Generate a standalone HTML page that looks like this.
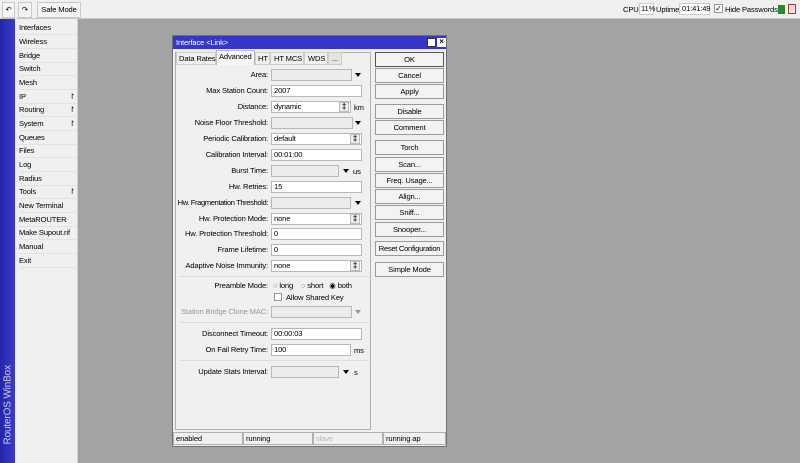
<!DOCTYPE html><html><head><style>
*{margin:0;padding:0;box-sizing:border-box}
body{width:800px;height:463px;overflow:hidden;background:#a3a3a3;font-family:"Liberation Sans",sans-serif;font-size:7.6px;letter-spacing:-0.15px;color:#000;position:relative;white-space:nowrap}
div{position:absolute}
.tb{left:0;top:0;width:800px;height:19px;background:#f0f0f0;border-bottom:1px solid #c8c8c8}
.tbtn{top:2px;height:16px;border:1px solid #c8c8c8;background:#f4f4f4;text-align:center;line-height:14px}
.side{left:0;top:19px;width:15px;height:444px;background:linear-gradient(90deg,#2525a8,#3a3ad0)}
.menu{left:15px;top:19px;width:63px;height:444px;background:#f0f0f0;border-right:1px solid #d0d0d0}
.mi{left:4px;width:58px;height:13.7px;line-height:13px;border-bottom:1px solid #e2e2e2}
.win{left:172px;top:35px;width:275px;height:412px;background:#f0f0f0;border:1px solid #707070}
.title{left:0;top:0;width:273px;height:13px;background:#3636c8;color:#fff;padding-left:3px;line-height:13px}
.lb{right:178px;text-align:right;line-height:12px}
.f{height:12px;background:#fff;border:1px solid #b8b8b8;line-height:10px;padding-left:2px}
.d{height:12px;background:#ececec;border:1px solid #b8b8b8}
.btn{left:202px;width:69px;height:15px;border:1px solid #9a9a9a;background:#f3f3f3;text-align:center;line-height:13px}
.ar{width:0;height:0;border-left:3px solid transparent;border-right:3px solid transparent;border-top:4px solid #000}
.sp{width:10px;height:10px;border:1px solid #bbb;background:#eee;text-align:center;line-height:8px;font-size:8px;font-weight:bold}
.sb{top:396px;height:13px;border:1px solid #b0b0b0;background:#f0f0f0;line-height:11px;padding-left:2px}
.sep{left:6px;width:190px;height:1px;background:#dcdcdc}
.tab{top:16px;height:13px;border:1px solid #ccc;line-height:11px;padding-left:2px}
</style></head><body>
<div class="tb">
<div class="tbtn" style="left:2px;width:13px">↶</div>
<div class="tbtn" style="left:18px;width:14px">↷</div>
<div class="tbtn" style="left:37px;width:44px">Safe Mode</div>
<div style="left:623px;top:5px">CPU:</div><div style="left:639px;top:3px;width:15px;height:12px;border:1px solid #ccc;background:#fff;padding-left:1px;line-height:10px">11%</div>
<div style="left:656px;top:5px">Uptime:</div><div style="left:679px;top:3px;width:31px;height:12px;border:1px solid #ccc;background:#fff;padding-left:2px;line-height:10px">01:41:49</div>
<div style="left:714px;top:4px;width:9px;height:9px;border:1px solid #999;background:#fff;font-size:8px;line-height:7px">✓</div>
<div style="left:725px;top:5px">Hide Passwords</div>
<div style="left:778px;top:5px;width:7px;height:9px;background:#2a8a2a"></div>
<div style="left:788px;top:4px;width:8px;height:10px;border:1px solid #a33;background:#fdd"></div>
</div>
<div class="side"><div style="left:-32px;top:380px;width:80px;transform:rotate(-90deg);color:#ccd;font-size:10px">RouterOS WinBox</div></div>
<div class="menu">
<div class="mi" style="top:2px">Interfaces</div><div class="mi" style="top:16px">Wireless</div><div class="mi" style="top:30px">Bridge</div><div class="mi" style="top:43px">Switch</div><div class="mi" style="top:57px">Mesh</div><div class="mi" style="top:71px">IP<span style="position:absolute;left:50px">↾</span></div><div class="mi" style="top:84px">Routing<span style="position:absolute;left:50px">↾</span></div><div class="mi" style="top:98px">System<span style="position:absolute;left:50px">↾</span></div><div class="mi" style="top:112px">Queues</div><div class="mi" style="top:125px">Files</div><div class="mi" style="top:139px">Log</div><div class="mi" style="top:153px">Radius</div><div class="mi" style="top:166px">Tools<span style="position:absolute;left:50px">↾</span></div><div class="mi" style="top:180px">New Terminal</div><div class="mi" style="top:194px">MetaROUTER</div><div class="mi" style="top:207px">Make Supout.rif</div><div class="mi" style="top:221px">Manual</div><div class="mi" style="top:235px">Exit</div>
</div>
<div class="win">
<div class="title">Interface &lt;Link&gt;
<div style="left:254px;top:2px;width:9px;height:9px;background:#fff;border:1px solid #333"></div>
<div style="left:264px;top:2px;width:9px;height:9px;background:#fff;color:#000;font-size:8px;line-height:8px;text-align:center;font-weight:bold">×</div></div>
<div style="left:2px;top:16px;width:196px;height:378px;border:1px solid #b0b0b0"></div>
<div class="tab" style="left:3px;width:40px">Data Rates</div>
<div style="left:43px;top:14px;height:15px;width:39px;border:1px solid #bbb;border-bottom:none;background:#f6f6f6;line-height:12px;padding-left:2px">Advanced</div>
<div class="tab" style="left:82px;width:15px">HT</div>
<div class="tab" style="left:97px;width:34px;padding-left:3px">HT MCS</div>
<div class="tab" style="left:131px;width:24px;padding-left:3px">WDS</div>
<div class="tab" style="left:155px;width:14px;background:#e4e4e4;padding-left:3px">...</div>

<div class="lb" style="top:33px">Area:</div><div class="d" style="left:98px;top:33px;width:81px"></div><div class="ar" style="left:182px;top:37px"></div>
<div class="lb" style="top:49px">Max Station Count:</div><div class="f" style="left:98px;top:49px;width:91px">2007</div>
<div class="lb" style="top:65px">Distance:</div><div class="f" style="left:98px;top:65px;width:80px">dynamic</div><div class="sp" style="left:166px;top:66px">‡</div><div style="left:181px;top:67px">km</div>
<div class="lb" style="top:81px">Noise Floor Threshold:</div><div class="d" style="left:98px;top:81px;width:82px"></div><div class="ar" style="left:182px;top:85px"></div>
<div class="lb" style="top:97px">Periodic Calibration:</div><div class="f" style="left:98px;top:97px;width:91px">default</div><div class="sp" style="left:177px;top:98px">‡</div>
<div class="lb" style="top:113px">Calibration Interval:</div><div class="f" style="left:98px;top:113px;width:91px">00:01:00</div>
<div class="lb" style="top:129px">Burst Time:</div><div class="d" style="left:98px;top:129px;width:68px"></div><div class="ar" style="left:170px;top:133px"></div><div style="left:180px;top:131px">us</div>
<div class="lb" style="top:145px">Hw. Retries:</div><div class="f" style="left:98px;top:145px;width:91px">15</div>
<div class="lb" style="top:161px;letter-spacing:-0.4px">Hw. Fragmentation Threshold:</div><div class="d" style="left:98px;top:161px;width:80px"></div><div class="ar" style="left:182px;top:165px"></div>
<div class="lb" style="top:177px">Hw. Protection Mode:</div><div class="f" style="left:98px;top:177px;width:91px">none</div><div class="sp" style="left:177px;top:178px">‡</div>
<div class="lb" style="top:192px">Hw. Protection Threshold:</div><div class="f" style="left:98px;top:192px;width:91px">0</div>
<div class="lb" style="top:208px">Frame Lifetime:</div><div class="f" style="left:98px;top:208px;width:91px">0</div>
<div class="lb" style="top:224px">Adaptive Noise Immunity:</div><div class="f" style="left:98px;top:224px;width:91px">none</div><div class="sp" style="left:177px;top:225px">‡</div>
<div class="sep" style="top:240px"></div>
<div class="lb" style="top:244px">Preamble Mode:</div>
<div style="left:100px;top:244px;line-height:12px">◌ long &nbsp;&nbsp; ◌ short &nbsp; ◉ both</div>
<div style="left:101px;top:257px;width:8px;height:8px;border:1px solid #999;background:#fff"></div><div style="left:113px;top:256px;line-height:12px">Allow Shared Key</div>
<div class="lb" style="top:270px;color:#999">Station Bridge Clone MAC:</div><div class="d" style="left:98px;top:270px;width:81px"></div><div class="ar" style="left:182px;top:274px;border-top-color:#999"></div>
<div class="sep" style="top:286px"></div>
<div class="lb" style="top:292px">Disconnect Timeout:</div><div class="f" style="left:98px;top:292px;width:91px">00:00:03</div>
<div class="lb" style="top:308px">On Fail Retry Time:</div><div class="f" style="left:98px;top:308px;width:80px">100</div><div style="left:181px;top:310px">ms</div>
<div class="sep" style="top:324px"></div>
<div class="lb" style="top:330px">Update Stats Interval:</div><div class="d" style="left:98px;top:330px;width:68px"></div><div class="ar" style="left:170px;top:334px"></div><div style="left:181px;top:332px">s</div>

<div class="btn" style="top:16px;border-color:#555">OK</div>
<div class="btn" style="top:32px">Cancel</div>
<div class="btn" style="top:48px">Apply</div>
<div class="btn" style="top:68px">Disable</div>
<div class="btn" style="top:84px">Comment</div>
<div class="btn" style="top:104px">Torch</div>
<div class="btn" style="top:121px">Scan...</div>
<div class="btn" style="top:137px">Freq. Usage...</div>
<div class="btn" style="top:153px">Align...</div>
<div class="btn" style="top:169px">Sniff...</div>
<div class="btn" style="top:186px">Snooper...</div>
<div class="btn" style="top:205px;letter-spacing:-0.3px">Reset Configuration</div>
<div class="btn" style="top:226px">Simple Mode</div>

<div class="sb" style="left:0;width:70px">enabled</div>
<div class="sb" style="left:70px;width:70px">running</div>
<div class="sb" style="left:140px;width:70px;color:#bbb">slave</div>
<div class="sb" style="left:210px;width:63px">running ap</div>
</div>
</body></html>
